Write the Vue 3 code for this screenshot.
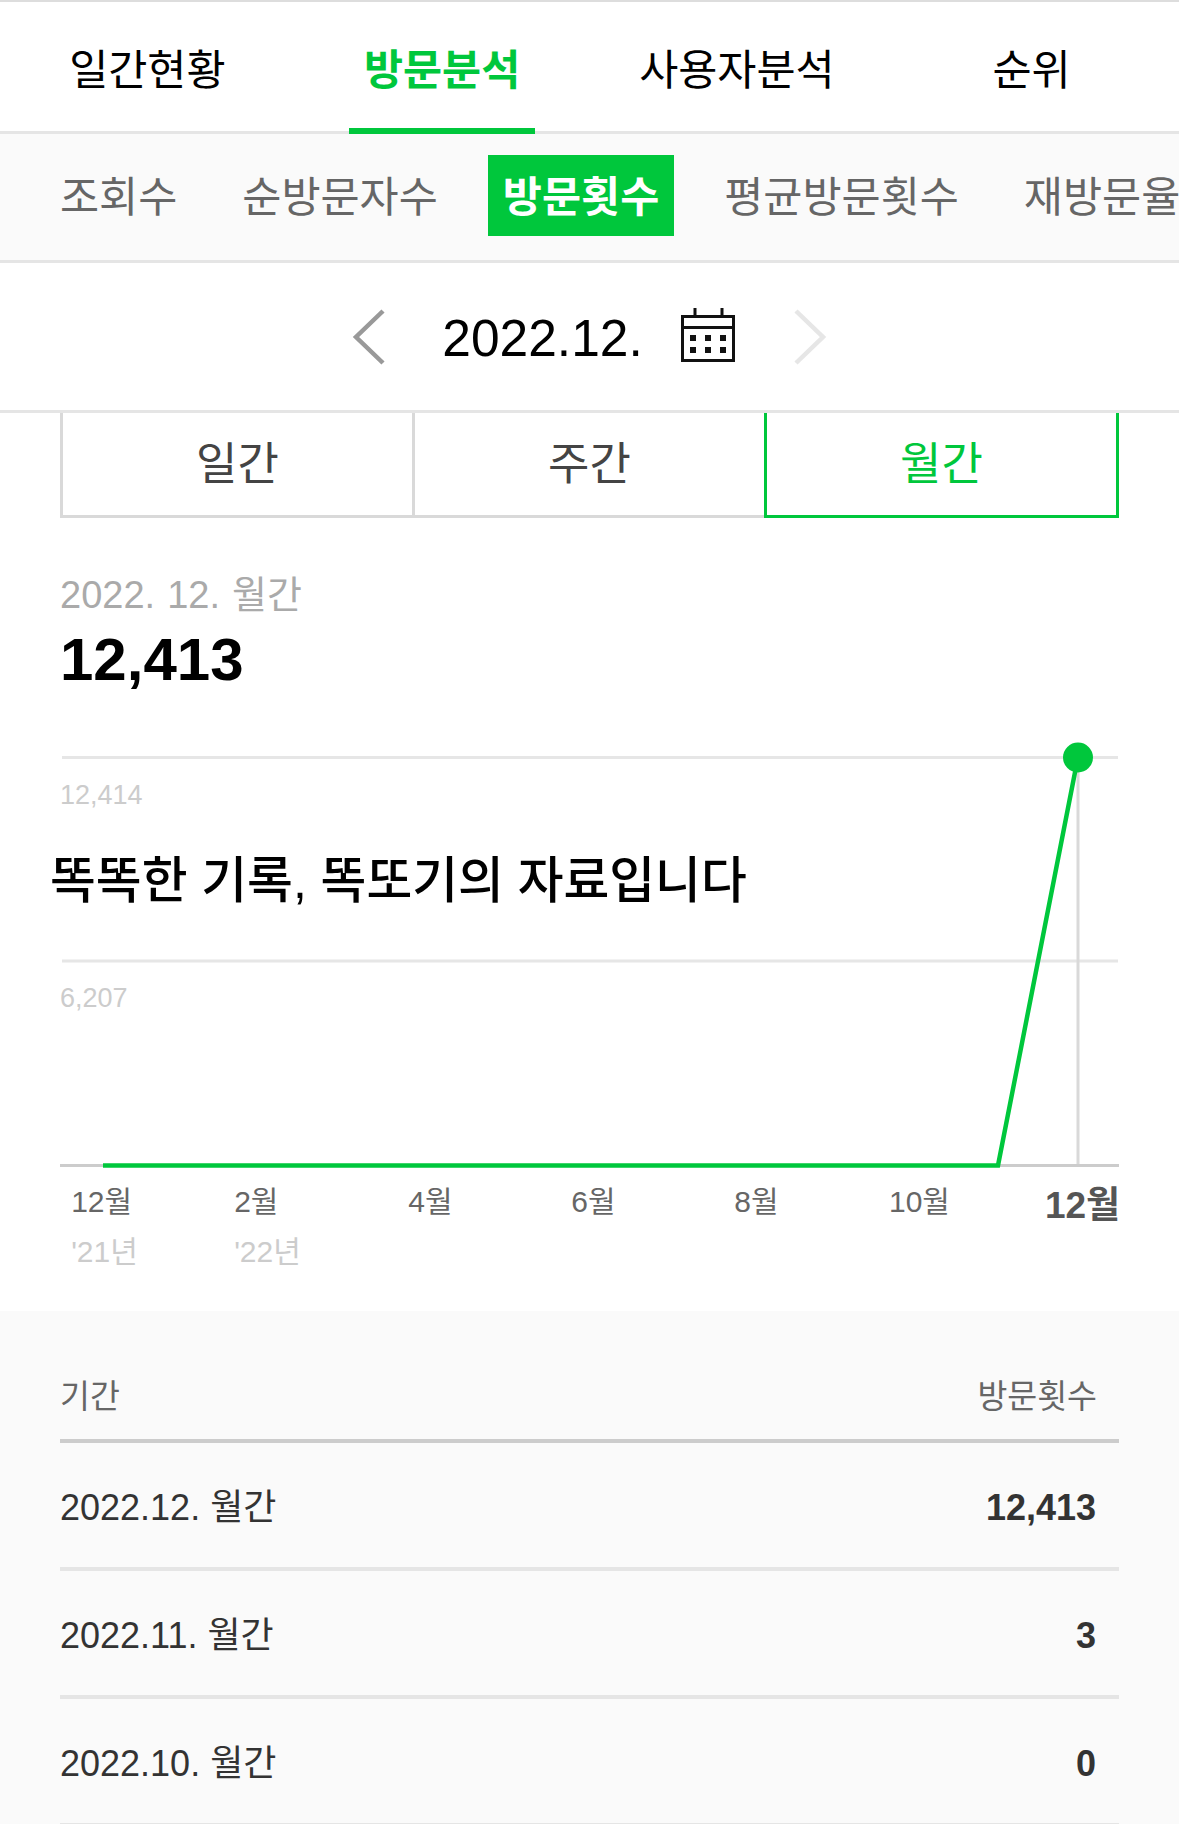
<script setup>
const mainTabs = ['일간현황', '방문분석', '사용자분석', '순위']
const subTabs = ['조회수', '순방문자수', '방문횟수', '평균방문횟수', '재방문율']
const periods = ['일간', '주간', '월간']
const months = [
  { m: '12월', y: "'21년" },
  { m: '2월', y: "'22년" },
  { m: '4월' },
  { m: '6월' },
  { m: '8월' },
  { m: '10월' },
  { m: '12월', now: true }
]
const rows = [
  { label: '2022.12. 월간', value: '12,413' },
  { label: '2022.11. 월간', value: '3' },
  { label: '2022.10. 월간', value: '0' }
]
</script>

<template>
  <div class="page">
    <nav class="main-tabs">
      <a v-for="(t, i) in mainTabs" :key="t" class="main-tab" :class="{ on: i === 1 }"><span>{{ t }}</span></a>
    </nav>

    <nav class="sub-tabs">
      <a v-for="(t, i) in subTabs" :key="t" class="sub-tab" :class="{ on: i === 2 }">{{ t }}</a>
    </nav>

    <div class="date-bar">
      <svg class="arrow" width="34" height="56" viewBox="0 0 34 56">
        <path d="M31 2 L4 28 L31 54" fill="none" stroke="#999" stroke-width="4.5" />
      </svg>
      <span class="date">2022.12.</span>
      <svg class="cal" width="54" height="54" viewBox="0 0 54 54">
        <path d="M1.5 8.5h51v44h-51z M1.5 19.5h51 M14 0v8 M41 0v8" fill="none" stroke="#111" stroke-width="3" />
        <path d="M9 27h6v6h-6z M24 27h6v6h-6z M39 27h6v6h-6z M9 39h6v6h-6z M24 39h6v6h-6z M39 39h6v6h-6z" fill="#111" />
      </svg>
      <svg class="arrow" width="34" height="56" viewBox="0 0 34 56">
        <path d="M3 2 L30 28 L3 54" fill="none" stroke="#e6e6e6" stroke-width="4.5" />
      </svg>
    </div>

    <section class="chart-section">
      <div class="period-tabs">
        <a v-for="(p, i) in periods" :key="p" class="period" :class="{ on: i === 2 }">{{ p }}</a>
      </div>

      <p class="caption">2022. 12. 월간</p>
      <p class="total">12,413</p>

      <div class="chart">
        <svg class="plot" width="1059" height="430" viewBox="0 0 1059 430">
          <path d="M2 23.5H1058 M2 227H1058" stroke="#e6e6e6" stroke-width="3" fill="none" />
          <path d="M0 431.5H1059" stroke="#ccc" stroke-width="3" fill="none" />
          <path d="M1018 23V430" stroke="#d9d9d9" stroke-width="3" fill="none" />
          <path d="M43 431.5H938L1018 23" stroke="#00c73c" stroke-width="4.5" fill="none" />
          <circle cx="1018" cy="23.5" r="15" fill="#00c73c" />
        </svg>
        <span class="tick tick-top">12,414</span>
        <span class="tick tick-mid">6,207</span>
        <span class="notice">똑똑한 기록, 똑또기의 자료입니다</span>
      </div>

      <div class="months">
        <div v-for="(x, i) in months" :key="i" class="month" :class="{ now: x.now }">
          <div class="month-inner">
            <span class="m">{{ x.m }}</span>
            <span v-if="x.y" class="y">{{ x.y }}</span>
          </div>
        </div>
      </div>
    </section>

    <section class="table">
      <div class="thead">
        <span>기간</span>
        <span>방문횟수</span>
      </div>
      <div v-for="r in rows" :key="r.label" class="row">
        <span>{{ r.label }}</span>
        <b>{{ r.value }}</b>
      </div>
    </section>
  </div>
</template>

<style>
html, body {
  margin: 0;
  background: #fff;
}
</style>

<style scoped>
.page {
  width: 1179px;
  height: 1824px;
  overflow: hidden;
  font-family: "Liberation Sans", "Noto Sans CJK KR", sans-serif;
  color: #000;
  background: #fff;
}

.main-tabs {
  display: flex;
  height: 129px;
  border-top: 2px solid #ddd;
  border-bottom: 3px solid #e5e5e5;
}

.main-tab {
  flex: 1;
  display: flex;
  justify-content: center;
  font-size: 42.5px;
  line-height: 138px;
}

.main-tab span {
  display: flex;
  justify-content: center;
  box-sizing: border-box;
  height: 132px;
  width: 186px;
  white-space: nowrap;
}

.main-tab.on span {
  color: #00c73c;
  font-weight: 700;
  border-bottom: 6px solid #00c73c;
}

.sub-tabs {
  display: flex;
  gap: 35px;
  box-sizing: border-box;
  height: 129px;
  padding: 21px 0 0 45px;
  background: #fafafa;
  border-bottom: 3px solid #e5e5e5;
  white-space: nowrap;
  overflow: hidden;
}

.sub-tab {
  padding: 0 15px;
  height: 81px;
  line-height: 85px;
  font-size: 42.5px;
  color: #666;
}

.sub-tab.on {
  color: #fff;
  font-weight: 700;
  background: #00c73c;
}

.date-bar {
  display: flex;
  align-items: center;
  justify-content: center;
  height: 147px;
  border-bottom: 3px solid #e5e5e5;
}

.date {
  margin: 0 38px 0 56px;
  padding-top: 2px;
  font-size: 51.5px;
}

.cal {
  margin: -3px 58px 0 0;
}

.chart-section {
  padding: 0 60px;
  height: 898px;
}

.period-tabs {
  display: flex;
  height: 105px;
}

.period {
  flex: 1;
  box-sizing: border-box;
  border: 3px solid #d9d9d9;
  border-top: 0;
  border-left-width: 0;
  text-align: center;
  font-size: 45px;
  line-height: 104px;
  color: #444;
}

.period:first-child {
  border-left-width: 3px;
}

.period.on {
  color: #00c73c;
  border-color: #00c73c;
  border-left-width: 3px;
  margin-left: -3px;
}

.caption {
  margin: 53px 0 0;
  font-size: 38px;
  line-height: 48px;
  word-spacing: 1.5px;
  color: #aaa;
}

.total {
  margin: 7px 0 0;
  font-size: 60px;
  line-height: 68px;
  font-weight: 700;
}

.chart {
  position: relative;
  margin-top: 40px;
  height: 430px;
}

.plot {
  display: block;
  overflow: visible;
}

.tick {
  position: absolute;
  left: 0;
  font-size: 27px;
  line-height: 32px;
  color: #ccc;
}

.tick-top {
  top: 45px;
}

.tick-mid {
  top: 248px;
}

.notice {
  position: absolute;
  left: -10px;
  top: 115px;
  font-size: 49.8px;
  font-weight: 500;
  line-height: 64px;
  white-space: nowrap;
}

.months {
  display: flex;
  margin: 18px 0 0 -37px;
}

.month {
  flex: 0 0 163px;
  display: flex;
  justify-content: center;
}

.month-inner {
  display: flex;
  flex-direction: column;
  align-items: flex-start;
}

.m {
  font-size: 30px;
  line-height: 40px;
  color: #666;
}

.y {
  margin-top: 10px;
  font-size: 30px;
  line-height: 40px;
  color: #ccc;
}

.now .m {
  font-size: 37px;
  line-height: 48px;
  font-weight: 700;
  color: #555;
}

.table {
  height: 513px;
  padding: 0 60px;
  background: #fafafa;
}

.thead {
  display: flex;
  justify-content: space-between;
  height: 132px;
  box-sizing: border-box;
  padding: 64px 22px 0 0;
  border-bottom: 4px solid #ccc;
  font-size: 32.5px;
  line-height: 44px;
  color: #666;
}

.row {
  display: flex;
  justify-content: space-between;
  align-items: baseline;
  height: 128px;
  box-sizing: border-box;
  padding: 43px 23px 0 0;
  border-bottom: 4px solid #e5e5e5;
  font-size: 36px;
  line-height: 44px;
  color: #333;
}

.row b {
  font-weight: 700;
}
</style>
